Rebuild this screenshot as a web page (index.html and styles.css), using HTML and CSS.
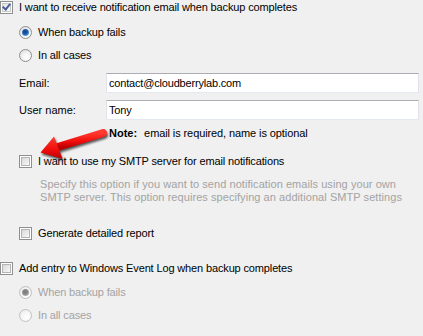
FILE: index.html
```html
<!DOCTYPE html>
<html>
<head>
<meta charset="utf-8">
<link rel="stylesheet" href="styles.css">
</head>
<body>
<div class="panel">
  <div class="row r-top"><span class="cb checked"></span><span class="lbl">I want to receive notification email when backup completes</span></div>
  <div class="row indent r-rad1"><span class="rb on"></span><span class="lbl">When backup fails</span></div>
  <div class="row indent r-rad2"><span class="rb"></span><span class="lbl">In all cases</span></div>
  <div class="field r-email"><span class="flabel">Email:</span><div class="input">contact@cloudberrylab.com</div></div>
  <div class="field r-user"><span class="flabel">User name:</span><div class="input">Tony</div></div>
  <div class="row note r-note"><b>Note:</b><span class="note-txt">email is required, name is optional</span></div>
  <div class="row indent r-smtp"><span class="cb"></span><span class="lbl">I want to use my SMTP server for email notifications</span></div>
  <div class="desc">Specify this option if you want to send notification emails using your own<br>SMTP server. This option requires specifying an additional SMTP settings</div>
  <div class="row indent r-gen"><span class="cb"></span><span class="lbl">Generate detailed report</span></div>
  <div class="row r-add"><span class="cb"></span><span class="lbl">Add entry to Windows Event Log when backup completes</span></div>
  <div class="row indent r-drad1 disabled"><span class="rb on"></span><span class="lbl">When backup fails</span></div>
  <div class="row indent r-drad2 disabled"><span class="rb"></span><span class="lbl">In all cases</span></div>

  <svg class="arrow" width="85" height="45" viewBox="30 118 85 45" xmlns="http://www.w3.org/2000/svg">
    <defs>
      <linearGradient id="ag" x1="0" y1="0" x2="0" y2="1">
        <stop offset="0" stop-color="#ff3b30"/>
        <stop offset="0.6" stop-color="#f00c0c"/>
        <stop offset="1" stop-color="#b80000"/>
      </linearGradient>
    </defs>
    <line x1="56" y1="147.5" x2="103" y2="133" stroke="url(#ag)" stroke-width="8" stroke-linecap="round"/>
    <polygon points="40.5,152.5 54,136.5 62.5,159" fill="url(#ag)"/>
  </svg>
</div>
</body>
</html>
```

FILE: styles.css
```css
html, body {
  margin: 0;
  padding: 0;
  background: #f0f0f0;
}
body {
  width: 423px;
  height: 336px;
  overflow: hidden;
  font-family: "Liberation Sans", Arial, sans-serif;
  font-size: 11px;
  color: #000;
}
.panel {
  position: relative;
  display: flex;
  flex-direction: column;
}
.row {
  display: flex;
  align-items: center;
  height: 14px;
  line-height: 14px;
  white-space: nowrap;
}
.indent { padding-left: 19px; }
.lbl { margin-left: 6px; letter-spacing: -0.14px; }

.r-top { margin-top: 0; }
.r-rad1 { margin-top: 11px; }
.r-rad2 { margin-top: 9px; }
.r-email { margin-top: 11px; }
.r-user { margin-top: 7px; }
.r-note { margin-top: 6px; }
.r-smtp { margin-top: 14px; }
.desc { margin-top: 10px; }
.r-gen { margin-top: 22px; }
.r-add { margin-top: 21px; }
.r-drad1 { margin-top: 10px; }
.r-drad2 { margin-top: 9px; }

/* checkbox */
.cb {
  flex: none;
  box-sizing: border-box;
  width: 13px;
  height: 13px;
  border: 1px solid #8e8f8f;
  background: #fff;
  position: relative;
}
.cb::before {
  content: "";
  position: absolute;
  left: 1px; top: 1px;
  width: 7px; height: 7px;
  border: 1px solid #b4b4b4;
  background: linear-gradient(135deg, #d8d8d8 0%, #e8e8e8 50%, #f8f8f8 100%);
}
.cb.checked::before {
  border-color: #c8c8c8;
  background: linear-gradient(135deg, #e6e6e6, #fafafa);
}
.cb.checked::after {
  content: "";
  position: absolute;
  left: 3px; top: 0px;
  width: 3px; height: 6px;
  border-right: 2px solid #4a5f97;
  border-bottom: 2px solid #4a5f97;
  transform: rotate(40deg);
}

/* radio */
.rb {
  flex: none;
  box-sizing: border-box;
  width: 13px;
  height: 13px;
  border-radius: 50%;
  border: 1px solid #8f8f8f;
  background: radial-gradient(circle at 60% 65%, #ffffff 0%, #f4f4f4 40%, #d6d6d6 100%);
  position: relative;
}
.rb.on::after {
  content: "";
  position: absolute;
  left: 2px; top: 2px;
  width: 7px; height: 7px;
  border-radius: 50%;
  background: radial-gradient(circle at 45% 40%, #1a3f7a 0%, #1d5aa8 40%, #5fa2e6 75%, #9ccaf4 100%);
}
.disabled .lbl { color: #a3a3a3; }
.disabled .rb {
  border-color: #c0c0c0;
  background: radial-gradient(circle at 60% 65%, #ffffff 0%, #f6f6f6 50%, #e4e4e4 100%);
}
.disabled .rb.on::after {
  background: radial-gradient(circle at 45% 40%, #7a7a7a 0%, #8c8c8c 45%, #bdbdbd 80%, #d6d6d6 100%);
}

/* fields */
.field {
  display: flex;
  align-items: center;
  height: 20px;
  padding-left: 19px;
}
.flabel {
  width: 87px;
  flex: none;
}
.input {
  box-sizing: border-box;
  width: 313px;
  height: 20px;
  line-height: 18px;
  padding-left: 2px;
  background: #fff;
  border: 1px solid #e2e3ea;
  border-top-color: #abadb3;
  border-left-color: #e2e3ea;
  border-bottom-color: #e3e9ef;
  white-space: nowrap;
  letter-spacing: -0.18px;
}

.note { padding-left: 109px; }
.note-txt { margin-left: 7px; letter-spacing: -0.1px; }

.desc {
  padding-left: 40px;
  line-height: 13px;
  color: #a3a3a3;
  white-space: nowrap;
  letter-spacing: 0.06px;
}

.arrow {
  position: absolute;
  left: 30px;
  top: 118px;
  filter: drop-shadow(1px 2px 1px rgba(0,0,0,0.65));
  overflow: visible;
}
```
